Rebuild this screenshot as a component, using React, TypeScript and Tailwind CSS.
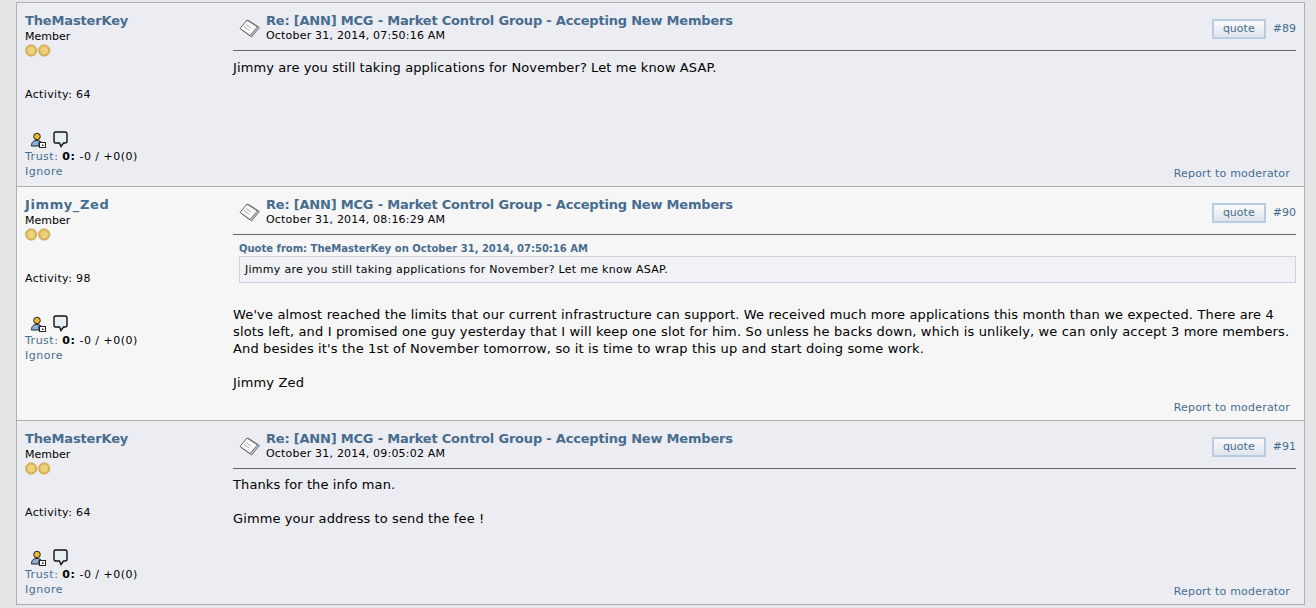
const Coin = () => (
  <svg width="13" height="13" viewBox="0 0 13 13" className="block">
    <circle cx="6.2" cy="6.5" r="5.6" fill="#dcb65c" stroke="#cfa64e" />
    <circle cx="6.2" cy="6.5" r="3.7" fill="#ecd27c" />
  </svg>
);

const TopicIcon = () => (
  <svg width="22" height="19" viewBox="0 0 22 19" className="block">
    <path d="M9 1 L20.5 8.5 L12.5 18 L3 11 Z" fill="#b9c3e6" stroke="#777" strokeWidth="1" />
    <path d="M8 1 L18.5 8 L11 16.5 L1 9.5 Z" fill="#f8f8f8" stroke="#666" strokeWidth="1" />
    <path d="M7 5.5 L12 9 M5 7.5 L10 11" stroke="#b0b0b0" strokeWidth="1" />
  </svg>
);

const UserIcon = () => (
  <svg width="16" height="16" viewBox="0 0 16 16" className="block">
    <circle cx="7" cy="4.5" r="3.3" fill="#e8b830" stroke="#222" strokeWidth="1" />
    <path d="M1.5 14 C1.5 9.5 4 8.5 7 8.5 C9 8.5 10.5 9 11 10 L9 10 L9 14 Z" fill="#8fb0d8" stroke="#222" strokeWidth="1" />
    <rect x="9.5" y="10.5" width="6" height="5" fill="#fff" stroke="#222" strokeWidth="1" />
    <rect x="12" y="12.5" width="1.5" height="1.5" fill="#222" />
  </svg>
);

const BubbleIcon = () => (
  <svg width="15" height="17" viewBox="0 0 15 17" className="block -mt-px">
    <path d="M2.5 1 H12 Q14 1 14 3 V10 Q14 12 12 12 H10.5 L8 15.5 L6.5 12 H2.5 Q1 12 1 10 V3 Q1 1 2.5 1 Z" fill="#e6eef6" stroke="#111" strokeWidth="1.4" />
  </svg>
);

type PostProps = {
  name: string;
  nameClass: string;
  activity: number;
  date: string;
  num: number;
  bg: string;
  children: React.ReactNode;
  h: string;
};

const Post = ({ name, nameClass, activity, date, num, bg, children, h }: PostProps) => (
  <div className={`flex border-b border-[#b0b0b0] ${bg} ${h}`}>
    <div className="w-[216px] shrink-0 pl-2 pt-[10px] flex flex-col">
      <div className={`text-[13px] leading-4 font-bold text-[#476c8e] ${nameClass}`}>{name}</div>
      <div className="text-[11px] leading-[14px] mt-[1px] text-black">Member</div>
      <div className="flex"><Coin /><Coin /></div>
      <div className="text-[11px] leading-[14px] mt-[31px] tracking-[0.35px] text-black">Activity: {activity}</div>
      <div className="flex items-start gap-[7px] mt-[30px] pl-[5px] h-[17px]"><UserIcon /><BubbleIcon /></div>
      <div className="text-[11px] leading-[14px] mt-[1px] tracking-[0.5px] text-[#476c8e]">
        Trust: <span className="font-bold text-black">0:</span> <span className="text-black">-0 / +0(0)</span>
      </div>
      <div className="text-[11px] leading-[14px] mt-[1px] tracking-[0.5px] text-[#476c8e]">Ignore</div>
    </div>
    <div className="flex-1 min-w-0 flex flex-col pr-2">
      <div className="flex items-start border-b border-[#666] h-[48px] pt-[7px]">
        <div className="ml-[6px] mt-[9px] w-[27px] shrink-0"><TopicIcon /></div>
        <div className="flex-1">
          <div className="text-[13px] leading-[16px] font-bold tracking-[-0.2px] text-[#476c8e] mt-[3px]">Re: [ANN] MCG - Market Control Group - Accepting New Members</div>
          <div className="text-[11px] leading-[14px] tracking-[0.2px] text-black">{date}</div>
        </div>
        <div className="flex items-center mt-[9px]">
          <div className="w-[54px] h-[20px] border-2 border-[#b8cde2] bg-gradient-to-b from-[#f8f9fb] to-[#dfe5ec] text-[11px] leading-[16px] text-center text-[#476c8e]">quote</div>
          <div className="ml-[7px] pt-px text-[11px] text-[#476c8e]">#{num}</div>
        </div>
      </div>
      <div className="flex-1 min-h-0">{children}</div>
      <div className="text-[11px] leading-[14px] tracking-[0.2px] text-right text-[#476c8e] pr-[6px] pb-[5px]">Report to moderator</div>
    </div>
  </div>
);

export default function App() {
  return (
    <div className="h-[608px] w-[1316px] overflow-hidden bg-[#e5e5e8] font-['DejaVu_Sans',sans-serif] pl-4 pr-[11px] pt-[2px]">
      <div className="border border-b-0 border-[#b0b0b0]">
        <Post name="TheMasterKey" nameClass="tracking-[-0.15px]" activity={64} date="October 31, 2014, 07:50:16 AM" num={89} bg="bg-[#ecedf3]" h="h-[184px]">
          <div className="text-[13px] leading-[17px] tracking-[0.1px] text-black pt-2">Jimmy are you still taking applications for November? Let me know ASAP.</div>
        </Post>
        <Post name="Jimmy_Zed" nameClass="tracking-[0.6px]" activity={98} date="October 31, 2014, 08:16:29 AM" num={90} bg="bg-[#f6f6f6]" h="h-[234px]">
          <div className="pt-[7px] pl-[6px]">
            <div className="text-[10px] leading-[14px] font-bold text-[#476c8e]">Quote from: TheMasterKey on October 31, 2014, 07:50:16 AM</div>
            <div className="border border-[#d0d0e0] bg-[#f1f2f6] h-[27px] pl-[5px] text-[11px] leading-[25px] tracking-[0.28px] text-black">Jimmy are you still taking applications for November? Let me know ASAP.</div>
          </div>
          <div className="text-[13px] leading-[17px] tracking-[0.15px] text-black mt-[23px]">
            <p>We've almost reached the limits that our current infrastructure can support. We received much more applications this month than we expected. There are 4 slots left, and I promised one guy yesterday that I will keep one slot for him. So unless he backs down, which is unlikely, we can only accept 3 more members. And besides it's the 1st of November tomorrow, so it is time to wrap this up and start doing some work.</p>
            <p className="mt-[17px]">Jimmy Zed</p>
          </div>
        </Post>
        <Post name="TheMasterKey" nameClass="tracking-[-0.15px]" activity={64} date="October 31, 2014, 09:05:02 AM" num={91} bg="bg-[#ecedf3]" h="h-[184px]">
          <div className="text-[13px] leading-[17px] tracking-[0.1px] text-black pt-[7px]">
            <p>Thanks for the info man.</p>
            <p className="mt-[17px]">Gimme your address to send the fee !</p>
          </div>
        </Post>
      </div>
    </div>
  );
}
